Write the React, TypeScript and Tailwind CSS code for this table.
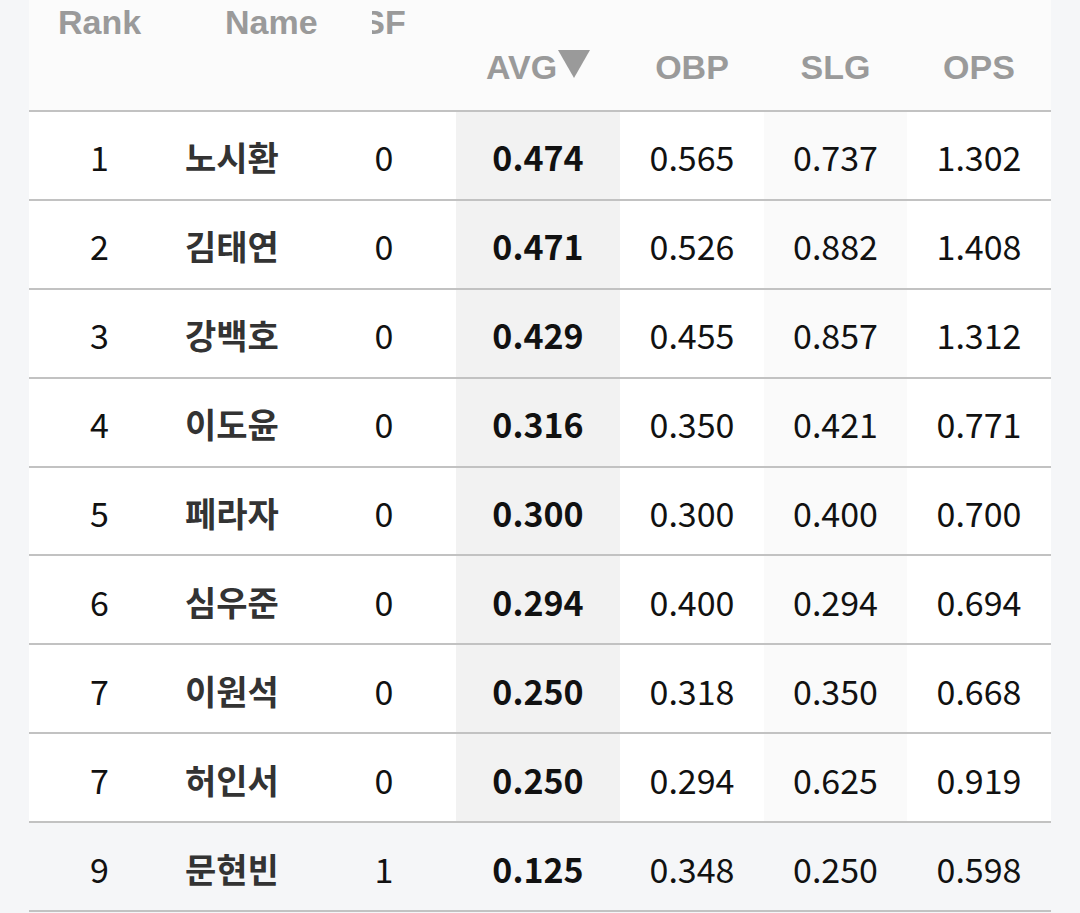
const rows = [
  { rank: 1, name: "노시환", sf: 0, avg: "0.474", obp: "0.565", slg: "0.737", ops: "1.302" },
  { rank: 2, name: "김태연", sf: 0, avg: "0.471", obp: "0.526", slg: "0.882", ops: "1.408" },
  { rank: 3, name: "강백호", sf: 0, avg: "0.429", obp: "0.455", slg: "0.857", ops: "1.312" },
  { rank: 4, name: "이도윤", sf: 0, avg: "0.316", obp: "0.350", slg: "0.421", ops: "0.771" },
  { rank: 5, name: "페라자", sf: 0, avg: "0.300", obp: "0.300", slg: "0.400", ops: "0.700" },
  { rank: 6, name: "심우준", sf: 0, avg: "0.294", obp: "0.400", slg: "0.294", ops: "0.694" },
  { rank: 7, name: "이원석", sf: 0, avg: "0.250", obp: "0.318", slg: "0.350", ops: "0.668" },
  { rank: 7, name: "허인서", sf: 0, avg: "0.250", obp: "0.294", slg: "0.625", ops: "0.919" },
  { rank: 9, name: "문현빈", sf: 1, avg: "0.125", obp: "0.348", slg: "0.250", ops: "0.598" },
];

const head = "font-['Liberation_Sans',Arial,sans-serif] text-[34px] font-bold leading-none text-[#9a9a9a]";
const body = "font-['Noto_Sans_CJK_KR','Noto_Sans',sans-serif] text-[34px] leading-none pt-[4px]";

function SortArrow() {
  return (
    <svg width="32" height="28" viewBox="0 0 32 28" className="ml-[1px] inline-block">
      <path d="M0 0 H32 L16 28 Z" fill="#9a9a9a" />
    </svg>
  );
}

export default function App() {
  return (
    <div className="h-[913px] w-[1080px] overflow-hidden bg-[#f5f6f8] px-[29px]">
      {/* header */}
      <div className="flex h-[112px] border-b-2 border-[#c2c2c2] bg-[#fbfbfb]">
        <div className={`flex w-[141px] justify-center pt-[5px] ${head}`}>Rank</div>
        <div className={`w-[202px] pl-[55px] pt-[5px] ${head}`}>Name</div>
        <div className="flex w-[679px] overflow-hidden">
          <div className={`-ml-[60px] flex w-[144px] shrink-0 justify-center pt-[5px] ${head}`}>SF</div>
          <div className={`flex w-[164px] shrink-0 items-start justify-center pt-[50px] ${head}`}>
            AVG
            <SortArrow />
          </div>
          <div className={`flex w-[144px] shrink-0 justify-center pt-[50px] ${head}`}>OBP</div>
          <div className={`flex w-[143px] shrink-0 justify-center pt-[50px] ${head}`}>SLG</div>
          <div className={`flex w-[144px] shrink-0 justify-center pt-[50px] ${head}`}>OPS</div>
        </div>
      </div>

      {/* body */}
      {rows.map((r, i) => {
        const last = i === rows.length - 1;
        return (
          <div
            key={i}
            className={`flex h-[88.9px] border-b-2 border-[#c2c2c2] ${last ? "bg-[#f5f6f8]" : "bg-white"}`}
          >
            <div className={`flex w-[141px] items-center justify-center text-[#111] ${body}`}>{r.rank}</div>
            <div className={`flex w-[202px] items-center pl-[15px] font-bold text-[#333] ${body}`}>{r.name}</div>
            <div className="flex w-[679px] overflow-hidden">
              <div className={`-ml-[60px] flex w-[144px] shrink-0 items-center justify-center text-[#111] ${body}`}>
                {r.sf}
              </div>
              <div
                className={`flex w-[164px] shrink-0 items-center justify-center font-bold text-[#111] ${body} ${
                  last ? "" : "bg-[#f2f2f2]"
                }`}
              >
                {r.avg}
              </div>
              <div className={`flex w-[144px] shrink-0 items-center justify-center text-[#111] ${body}`}>{r.obp}</div>
              <div
                className={`flex w-[143px] shrink-0 items-center justify-center text-[#111] ${body} ${
                  last ? "" : "bg-[#fafafa]"
                }`}
              >
                {r.slg}
              </div>
              <div className={`flex w-[144px] shrink-0 items-center justify-center text-[#111] ${body}`}>{r.ops}</div>
            </div>
          </div>
        );
      })}
    </div>
  );
}
